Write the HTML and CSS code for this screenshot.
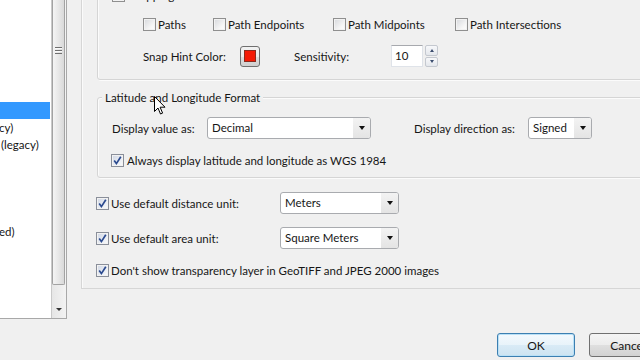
FILE: index.html
```html
<!DOCTYPE html>
<html>
<head>
<meta charset="utf-8">
<link rel="stylesheet" href="styles.css">
</head>
<body>
<div class="screen">
  <aside class="tree">
    <ul class="list">
      <li class="item selected"></li>
      <li class="item"><span class="cut">cy)</span></li>
      <li class="item"><span class="ind">(legacy)</span></li>
      <li class="item"></li>
      <li class="item"></li>
      <li class="item"></li>
      <li class="item"></li>
      <li class="item"><span class="cut">ed)</span></li>
    </ul>
    <div class="vscroll">
      <div class="thumb"><span class="grip"></span></div>
      <div class="track"></div>
      <div class="arrow-down"><span class="tri-down small"></span></div>
    </div>
  </aside>

  <main class="dialog">
    <section class="page">
      <div class="group snap">
        <div class="row row0"><span class="cb"></span><span class="lbl">Snapping</span></div>
        <div class="row targets">
          <label class="opt"><span class="cb"></span><span>Paths</span></label>
          <label class="opt"><span class="cb"></span><span>Path Endpoints</span></label>
          <label class="opt"><span class="cb"></span><span>Path Midpoints</span></label>
          <label class="opt"><span class="cb"></span><span>Path Intersections</span></label>
        </div>
        <div class="row hint">
          <span class="hint-label">Snap Hint Color:</span>
          <span class="color-btn"><span class="swatch"></span></span>
          <span class="sens-label">Sensitivity:</span>
          <span class="spin-input">10</span>
          <span class="spin-btns">
            <span class="spin-b"><span class="tri-up tiny"></span></span>
            <span class="spin-b"><span class="tri-down tiny"></span></span>
          </span>
        </div>
      </div>

      <div class="group latlon">
        <span class="legend">Latitude and Longitude Format</span>
        <div class="row fmt">
          <span class="fmt-label">Display value as:</span>
          <span class="combo w-decimal"><span class="combo-text">Decimal</span><span class="combo-btn"><span class="tri-down"></span></span></span>
          <span class="dir-label">Display direction as:</span>
          <span class="combo w-signed"><span class="combo-text">Signed</span><span class="combo-btn"><span class="tri-down"></span></span></span>
        </div>
        <div class="row wgs"><span class="cb on"><svg viewBox="0 0 11 11" width="11" height="11"><path d="M2.2 5.6 L4.4 8.6 L8.8 1.8" fill="none" stroke="#2b4a8f" stroke-width="1.7"/></svg></span><span class="lbl">Always display latitude and longitude as WGS 1984</span></div>
      </div>

      <div class="row unit first">
        <label class="unit-label"><span class="cb on"><svg viewBox="0 0 11 11" width="11" height="11"><path d="M2.2 5.6 L4.4 8.6 L8.8 1.8" fill="none" stroke="#2b4a8f" stroke-width="1.7"/></svg></span><span class="lbl">Use default distance unit:</span></label>
        <span class="combo w-unit"><span class="combo-text">Meters</span><span class="combo-btn"><span class="tri-down"></span></span></span>
      </div>
      <div class="row unit">
        <label class="unit-label"><span class="cb on"><svg viewBox="0 0 11 11" width="11" height="11"><path d="M2.2 5.6 L4.4 8.6 L8.8 1.8" fill="none" stroke="#2b4a8f" stroke-width="1.7"/></svg></span><span class="lbl">Use default area unit:</span></label>
        <span class="combo w-unit"><span class="combo-text">Square Meters</span><span class="combo-btn"><span class="tri-down"></span></span></span>
      </div>
      <div class="row tiff">
        <span class="cb on"><svg viewBox="0 0 11 11" width="11" height="11"><path d="M2.2 5.6 L4.4 8.6 L8.8 1.8" fill="none" stroke="#2b4a8f" stroke-width="1.7"/></svg></span><span class="lbl">Don't show transparency layer in GeoTIFF and JPEG 2000 images</span>
      </div>
    </section>

    <footer class="buttons">
      <button class="btn default">OK</button>
      <button class="btn">Cancel</button>
    </footer>
  </main>

  <svg class="cursor" width="12" height="19" viewBox="0 0 12 19"><path d="M0.5 0.5 L0.5 15.5 L4 12 L6.5 18 L8.6 17.1 L6.1 11.2 L11 11.2 Z" fill="#fff" stroke="#000" stroke-width="1"/></svg>
</div>
</body>
</html>
```

FILE: styles.css
```css
* { box-sizing: border-box; }
html, body { margin: 0; padding: 0; }
body {
  width: 640px;
  height: 360px;
  overflow: hidden;
  background: #f0f0f0;
  font-family: "Lato", "Open Sans", sans-serif;
  font-size: 11.5px;
  color: #161616;
}
.screen {
  position: relative;
  display: flex;
  width: 640px;
  height: 360px;
  overflow: hidden;
}

/* left tree */
.tree {
  flex: 0 0 67px;
  height: 319px;
  display: flex;
  background: #fff;
  border-right: 1px solid #a8a8a8;
  border-bottom: 1px solid #a8a8a8;
}
.list {
  width: 51px;
  margin: 0;
  padding: 102px 0 0 0;
  list-style: none;
  overflow: hidden;
}
.item {
  height: 17.4px;
  line-height: 17px;
  white-space: nowrap;
}
.item.selected { background: #3399ff; margin-right: 1px; height: 17px; }
.item .cut { margin-left: -1px; }
.item .ind { margin-left: 1px; }

.vscroll {
  width: 15px;
  display: flex;
  flex-direction: column;
  border-left: 1px solid #c9c9c9;
  background: linear-gradient(to right, #e6e6e6, #f3f3f3);
}
.thumb {
  height: 285px;
  margin: 0 1px 0 0;
  border: 1px solid #a2a2a2;
  border-top: none;
  border-radius: 0 0 2px 2px;
  background: linear-gradient(to right, #f4f4f4, #e7e7e7 50%, #d9d9d9);
  display: flex;
  justify-content: center;
  padding-top: 47px;
}
.grip {
  width: 7px;
  height: 7px;
  background: repeating-linear-gradient(to bottom, #6f6f6f 0 1px, #fafafa 1px 2px, transparent 2px 3px);
}
.track { flex: 1; }
.arrow-down {
  height: 17px;
  display: flex;
  align-items: center;
  justify-content: center;
}

/* triangles */
.tri-down {
  width: 0; height: 0;
  border-left: 3.5px solid transparent;
  border-right: 3.5px solid transparent;
  border-top: 4px solid #111;
}
.tri-down.small { border-left-width: 3px; border-right-width: 3px; border-top: 3px solid #333; }
.tri-down.tiny { border-left-width: 2.5px; border-right-width: 2.5px; border-top: 3px solid #3b4d6e; }
.tri-up.tiny {
  width: 0; height: 0;
  border-left: 2.5px solid transparent;
  border-right: 2.5px solid transparent;
  border-bottom: 3px solid #3b4d6e;
}

/* dialog */
.dialog {
  flex: 0 0 610px;
  padding-left: 14px;
  padding-right: 10px;
  display: flex;
  flex-direction: column;
}
.page {
  margin-top: -31px;
  height: 320px;
  flex: 0 0 320px;
  border-left: 1px solid #d6d6d6;
  border-bottom: 1px solid #d6d6d6;
  padding-left: 14px;
  box-shadow: inset 1px 0 #fafafa;
}
.group {
  margin-left: 1px;
  border: 1px solid #d5d5d5;
  border-radius: 3px;
  box-shadow: inset 1px 1px #fbfbfb, 1px 1px #fbfbfb;
}
.row {
  display: flex;
  align-items: center;
  white-space: nowrap;
}
.lbl { margin-left: 3px; }

/* checkbox */
.cb {
  flex: 0 0 13px;
  width: 13px;
  height: 13px;
  border: 1px solid #8f8f8f;
  background: linear-gradient(135deg, #d6d8dc, #f7f7f7 70%, #fdfdfd);
  box-shadow: inset 0 0 0 1px #f2f2f2;
  display: flex;
  align-items: center;
  justify-content: center;
}
.cb.on {
  border-color: #8a8f9a;
  background: linear-gradient(135deg, #cfd6e4, #eef1f6 70%, #fafbfd);
}

/* snap group */
.snap { padding: 17px 0 12px 14px; }
.row0 { height: 16px; }
.targets {
  margin: 13px 0 0 31px;
  height: 16px;
  display: grid;
  grid-template-columns: 70px 120px 122px auto;
}
.opt { display: flex; align-items: center; }
.opt .cb { margin-right: 2px; }
.hint { margin: 13px 0 0 31px; height: 22px; }
.hint-label { width: 97px; }
.color-btn {
  width: 20px;
  height: 21px;
  border: 1px solid #707070;
  border-radius: 3px;
  background: linear-gradient(to bottom, #f2f2f2, #ebebeb 50%, #dddddd 50%, #cfcfcf);
  display: flex;
  align-items: center;
  justify-content: center;
}
.swatch {
  width: 12px;
  height: 12px;
  background: #f41a05;
  border: 1px solid #8a2a1e;
}
.sens-label { margin-left: 34px; width: 97px; }
.spin-input {
  width: 32px;
  height: 22px;
  background: #fff;
  border: 1px solid #dfe3e9;
  border-top-color: #a7a9ae;
  padding-left: 3px;
  line-height: 20px;
}
.spin-btns {
  margin-left: 2px;
  width: 13px;
  height: 22px;
  display: flex;
  flex-direction: column;
  gap: 1px;
}
.spin-b {
  flex: 1;
  border: 1px solid #c4c8cf;
  border-radius: 2px;
  background: linear-gradient(to bottom, #f7f8fa, #e4e7ec);
  display: flex;
  align-items: center;
  justify-content: center;
}

/* lat/lon group */
.latlon { margin-top: 17px; padding: 0 0 9px 14px; }
.legend {
  display: block;
  width: fit-content;
  height: 16px;
  margin: -8px 0 0 -10px;
  padding: 0 3px;
  line-height: 16px;
  background: #f0f0f0;
}
.fmt { margin-top: 11px; height: 22px; }
.fmt-label { width: 95px; }
.dir-label { margin-left: 43px; width: 114px; }
.wgs { margin: 13px 0 0 -1px; height: 16px; }

/* combo */
.combo {
  height: 22px;
  display: flex;
  border: 1px solid #a9abaf;
  border-radius: 3px;
  background: #fff;
  overflow: hidden;
}
.combo-text { flex: 1; padding-left: 4px; line-height: 20px; }
.combo-btn {
  width: 17px;
  display: flex;
  align-items: center;
  justify-content: center;
  background: linear-gradient(to bottom, #f3f3f3, #e4e4e4);
}
.w-decimal { width: 164px; }
.w-signed { width: 64px; }
.w-unit { width: 119px; }

/* units */
.unit { height: 22px; margin-top: 13px; }
.unit.first { margin-top: 14px; }
.unit-label { width: 184px; display: flex; align-items: center; }
.unit-label .lbl, .tiff .lbl { margin-left: 2px; }
.tiff { height: 16px; margin-top: 13px; }

/* buttons */
.buttons {
  margin-top: 44px;
  display: flex;
  justify-content: flex-end;
  gap: 14px;
}
.btn {
  width: 78px;
  height: 24px;
  font: inherit;
  font-size: 12px;
  color: #161616;
  border: 1px solid #707070;
  border-radius: 3px;
  background: linear-gradient(to bottom, #f4f4f4, #ececec 50%, #dfdfdf 50%, #d2d2d2);
  padding: 0;
}
.btn.default {
  border-color: #3c7fb1;
  box-shadow: inset 0 0 0 1px #b9e0f6;
  background: linear-gradient(to bottom, #f3f9fd, #e8f3fa 50%, #d9ebf6 50%, #cde3f1);
}

.cursor { position: absolute; left: 154px; top: 96px; }
```
